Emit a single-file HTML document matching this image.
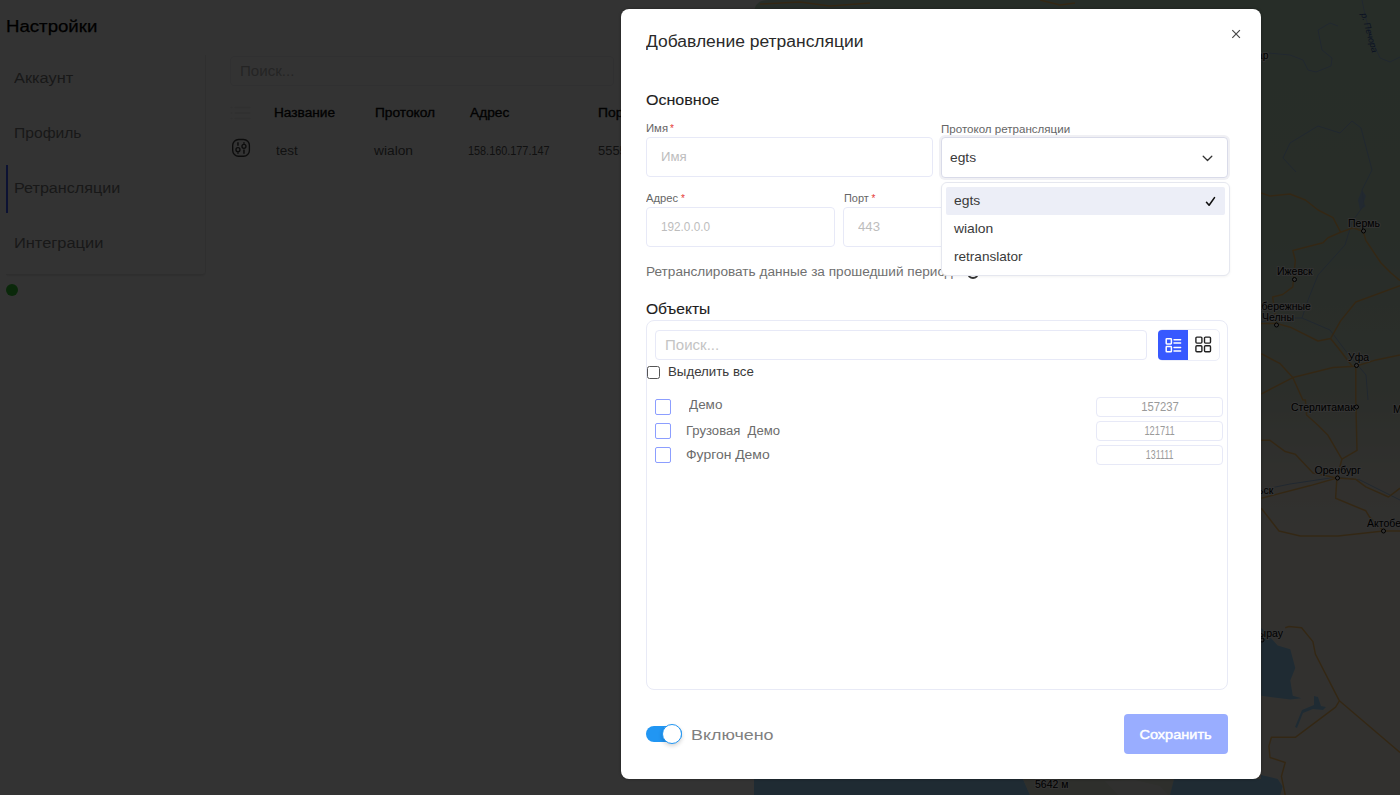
<!DOCTYPE html>
<html lang="ru">
<head>
<meta charset="utf-8">
<title>Настройки</title>
<style>
*{box-sizing:border-box;margin:0;padding:0}
html,body{width:1400px;height:795px;overflow:hidden;background:#fff}
body{font-family:"Liberation Sans",sans-serif;color:#222;position:relative}
.a{position:absolute;white-space:nowrap}
.t{position:absolute;white-space:pre;line-height:20px;height:20px}
#page{position:absolute;left:0;top:0;width:1400px;height:795px;background:#fff}
#overlay{position:absolute;left:0;top:0;width:1400px;height:795px;background:rgba(0,0,0,.8)}
.side{left:6px;top:55px;width:200px;height:220px;border-radius:0 0 4px 0;border-right:1px solid #ebebeb;border-bottom:1px solid #e6e6e6;box-shadow:0 2px 2px -1px rgba(0,0,0,.1);background:#fff}
#modal{position:absolute;left:621px;top:9px;width:640px;height:770px;background:#fff;border-radius:8px;overflow:hidden;box-shadow:0 0 3px rgba(0,0,0,.35)}
.inp{position:absolute;border:1px solid #e7e9f7;border-radius:4px;background:#fff}
.cb{position:absolute;width:16px;height:16px;border:1px solid #8c9eff;border-radius:2px;background:#fff}
.ast{position:absolute;font-size:10px;line-height:10px;color:#e53935}
</style>
</head>
<body>
<div id="page">
  <div class="a side"></div>
  <div class="a" style="left:6px;top:165px;width:2px;height:48px;background:#3d5afe"></div>
  <div class="a" style="left:6px;top:284px;width:12px;height:12px;border-radius:50%;background:#34c834"></div>
  <div class="a" style="left:230px;top:56px;width:384px;height:30px;border:1px solid #efeff2;border-radius:4px"></div>
  <svg class="a" style="left:230px;top:104px" width="22" height="18" viewBox="0 0 22 18" stroke="#ededed" stroke-width="1.6" stroke-linecap="round"><path d="M1 3.5h.8M5 3.5h15M1 9h.8M5 9h15M1 14.5h.8M5 14.5h15"/></svg>
  <svg class="a" style="left:231px;top:138px" width="20" height="20" viewBox="0 0 20 20" fill="none" stroke="#3c3c3c" stroke-width="1.35"><rect x="1.7" y="1.45" width="16.7" height="16.75" rx="5.8"/><path d="M6.97 4.3v3.5M6.97 14.3v1.4M12.96 4.3v1.5M12.96 11.5v4.2" stroke-width="1.5"/><circle cx="6.97" cy="11.67" r="2"/><circle cx="12.96" cy="8.3" r="2"/></svg>
  <div class="t" style="left:6.4px;top:16.8px;font-size:16px;color:#000;transform-origin:0 50%;transform:scaleX(1.164);-webkit-text-stroke:.25px #000">Настройки</div>
  <div class="t" style="left:13.8px;top:68.0px;font-size:14px;color:#7a7a7a;transform-origin:0 50%;transform:scaleX(1.168)">Аккаунт</div>
  <div class="t" style="left:13.8px;top:123.0px;font-size:14px;color:#7a7a7a;transform-origin:0 50%;transform:scaleX(1.117)">Профиль</div>
  <div class="t" style="left:13.8px;top:178.0px;font-size:14px;color:#7a7a7a;transform-origin:0 50%;transform:scaleX(1.153)">Ретрансляции</div>
  <div class="t" style="left:13.8px;top:233.0px;font-size:14px;color:#7a7a7a;transform-origin:0 50%;transform:scaleX(1.173)">Интеграции</div>
  <div class="t" style="left:240.4px;top:60.6px;font-size:14px;color:#b5b5b5;transform-origin:0 50%;transform:scaleX(1.078)">Поиск...</div>
  <div class="t" style="left:274.2px;top:102.7px;font-size:12px;color:#0a0a0a;transform-origin:0 50%;transform:scaleX(1.138);-webkit-text-stroke:.32px #0a0a0a">Название</div>
  <div class="t" style="left:374.5px;top:102.7px;font-size:12px;color:#0a0a0a;transform-origin:0 50%;transform:scaleX(1.144);-webkit-text-stroke:.32px #0a0a0a">Протокол</div>
  <div class="t" style="left:470.4px;top:102.7px;font-size:12px;color:#0a0a0a;transform-origin:0 50%;transform:scaleX(1.144);-webkit-text-stroke:.32px #0a0a0a">Адрес</div>
  <div class="t" style="left:598.4px;top:102.7px;font-size:12px;color:#0a0a0a;transform-origin:0 50%;transform:scaleX(1.157);-webkit-text-stroke:.32px #0a0a0a">Порт</div>
  <div class="t" style="left:276.4px;top:140.7px;font-size:12px;color:#555;transform-origin:0 50%;transform:scaleX(1.122)">test</div>
  <div class="t" style="left:374.2px;top:140.7px;font-size:12px;color:#555;transform-origin:0 50%;transform:scaleX(1.146)">wialon</div>
  <div class="t" style="left:468.2px;top:140.7px;font-size:12px;color:#555;transform-origin:0 50%;transform:scaleX(0.905)">158.160.177.147</div>
  <div class="t" style="left:598.4px;top:140.7px;font-size:12px;color:#555;transform-origin:0 50%;transform:scaleX(1.079)">5555</div>
<svg class="a" style="left:0;top:0" width="1400" height="795" viewBox="0 0 1400 795">
<defs><linearGradient id="mg" x1="0" y1="0" x2="0" y2="1"><stop offset="0" stop-color="#c3e1c8"/><stop offset=".3" stop-color="#c6e0c9"/><stop offset=".5" stop-color="#d9e5d3"/><stop offset=".6" stop-color="#f1efe4"/><stop offset=".68" stop-color="#f9f5ec"/><stop offset="1" stop-color="#f9f5ec"/></linearGradient></defs>
<path d="M768 0H1400V795H754V14Q754 0 768 0Z" fill="url(#mg)"/>
<path d="M754 779H1023L1030 795H754Z" fill="#9bd7ff"/>
<path d="M1023 779H1174L1170 795H1030Z" fill="#e4e9da"/><path d="M1105 781l30-1 25 6 8 9h-50z" fill="#f0f0ea"/>
<path d="M1174 779H1261V775L1277.7 778.9L1282.7 786.4L1280.2 795H1170Z" fill="#9bd7ff"/>
<path d="M1261.3 627.7L1277.7 645.4L1290.3 649.2L1295.3 668L1290.3 680.6L1292.8 695.8L1301.6 698.3L1290.3 699.6L1261.3 695.8Z" fill="#9bd7ff"/>
<path d="M1314 696l4 1 3 9 5 1-3 3-10-1-10 4-6 15-2-1 7-17 12-5z" fill="#9bd7ff"/>
<path d="M1362 190l4 6-3 8 3 2-6 4-2-10z" fill="#a9cdf0"/>
<polyline points="1268,53 1290,55 1303,60 1308,70 1316,72 1331,66 1332,58 1322,50 1318,30 1330,23 1338,26" fill="none" stroke="#a3c4ea" stroke-width="1"/>
<polyline points="1362,0 1365,15 1372,40 1380,58 1390,62 1400,57" fill="none" stroke="#a3c4ea" stroke-width="1"/>
<polyline points="1296,172 1283,158 1290,143 1318,126 1340,133 1352,121 1361,128 1372,170 1362,190 1364,205 1352,222 1345,245 1318,275 1308,300 1302,318 1330,330 1345,350 1366,375 1368,400" fill="none" stroke="#a3c4ea" stroke-width="1"/>
<polyline points="1261,322 1280,318 1302,318" fill="none" stroke="#a3c4ea" stroke-width="1"/>
<polyline points="1261,490 1290,484 1337,477 1360,480 1400,500" fill="none" stroke="#a3c4ea" stroke-width="1"/>
<polyline points="1261,323.4 1276.4,323.4 1290.3,327.2 1318,341 1330.6,338.5 1340.6,320.9 1355.8,302 1400,285.6" fill="none" stroke="#ffc266" stroke-width="1.5" stroke-linejoin="round"/>
<polyline points="1363.3,231.5 1353.2,227.7 1340.6,232.2 1328,237.8 1323,242.8 1292.8,250.4 1295.3,260.5 1292.8,286.9 1282.7,294.5 1272.6,297 1276.4,323.4" fill="none" stroke="#ffc266" stroke-width="1.5" stroke-linejoin="round"/>
<polyline points="1363.3,231.5 1365.8,240.3 1381,263 1391,273 1400,280.6" fill="none" stroke="#ffc266" stroke-width="1.5" stroke-linejoin="round"/>
<polyline points="1340.6,232.2 1333,217.6 1318,210 1305.4,200 1290,194 1270,196 1261,193" fill="none" stroke="#ffc266" stroke-width="1.5" stroke-linejoin="round"/>
<polyline points="1355.8,366.2 1333,367.5 1292.8,377.6 1280.2,363.7 1261.3,353.7" fill="none" stroke="#ffc266" stroke-width="1.5" stroke-linejoin="round"/>
<polyline points="1261.3,394 1292.8,377.6 1302.9,400 1305.4,400 1306.6,415 1318,425.2 1328,435.3 1341.9,459.2 1336.9,478" fill="none" stroke="#ffc266" stroke-width="1.5" stroke-linejoin="round"/>
<polyline points="1355.8,366.2 1376,359.9 1400,354.9" fill="none" stroke="#ffc266" stroke-width="1.5" stroke-linejoin="round"/>
<polyline points="1352,366 1340.6,351 1330.6,338.5" fill="none" stroke="#ffc266" stroke-width="1.5" stroke-linejoin="round"/>
<polyline points="1355.8,366.2 1355.8,400 1357,450.4 1341.9,459.2" fill="none" stroke="#ffc266" stroke-width="1.5" stroke-linejoin="round"/>
<polyline points="1336.9,478 1310.4,485.6 1261.3,498.2" fill="none" stroke="#ffc266" stroke-width="1.5" stroke-linejoin="round"/>
<polyline points="1261.3,440.3 1270,440.3 1285.2,451.6 1295.3,454.2 1313,473 1336.9,478" fill="none" stroke="#ffc266" stroke-width="1.5" stroke-linejoin="round"/>
<polyline points="1336.9,478 1355.8,479.3 1365.8,486.9 1388.5,497 1400,488.2" fill="none" stroke="#ffc266" stroke-width="1.5" stroke-linejoin="round"/>
<polyline points="1336.9,478 1335.6,498.2 1365.8,510.8 1369.6,517.1 1383.5,531 1400,531" fill="none" stroke="#ffc266" stroke-width="1.5" stroke-linejoin="round"/>
<polyline points="1261.3,508.3 1279,531 1300.3,536 1338,536 1383.5,531" fill="none" stroke="#ffc266" stroke-width="1.5" stroke-linejoin="round"/>
<polyline points="1285.2,627.7 1289,626.5 1301.6,627.7 1312.9,641.6 1315.4,654.2 1338.1,698.3 1339.4,700.8 1335.6,707.1 1295.3,737.3 1271.4,737.3 1268.9,746.1 1270,757.5 1285.2,762.5 1281.4,776.4 1285.2,795" fill="none" stroke="#ffc266" stroke-width="1.5" stroke-linejoin="round"/>
<polyline points="1339.4,700.8 1400,752.4" fill="none" stroke="#ffc266" stroke-width="1.5" stroke-linejoin="round"/>
<polyline points="760,4 800,2 830,6 870,3" fill="none" stroke="#ffc266" stroke-width="1.5" stroke-linejoin="round"/>
<polyline points="1040,0 1060,5 1075,3" fill="none" stroke="#ffc266" stroke-width="1.5" stroke-linejoin="round"/>
<g font-family="'Liberation Sans',sans-serif" font-size="10.5" fill="#000" stroke="#fff" stroke-width="2" paint-order="stroke" stroke-linejoin="round">
<text x="1348" y="226.5">Пермь</text>
<text x="1277" y="274.5">Ижевск</text>
<text x="1248" y="310">Набережные</text>
<text x="1262" y="321">Челны</text>
<text x="1348" y="361">Уфа</text>
<text x="1291" y="411">Стерлитамак</text>
<text x="1314.5" y="473.5">Оренбург</text>
<text x="1367" y="527">Актобе</text>
<text x="1234" y="494">Уральск</text>
<text x="1247" y="637">Атырау</text>
<text x="1393" y="413">Магнитогорск</text>
<text x="1035" y="788">5642 м</text>
<text x="1268.5" y="59" text-anchor="end">Сыктывкар</text>
</g>
<text font-family="'Liberation Sans',sans-serif" font-size="9" font-style="italic" fill="#3a5ea8" transform="translate(1361,14) rotate(74)">р. Печора</text>
<circle cx="1363.5" cy="231" r="2" fill="#fff" stroke="#000" stroke-width="1"/>
<circle cx="1294.5" cy="279.5" r="2" fill="#fff" stroke="#000" stroke-width="1"/>
<circle cx="1276.5" cy="325" r="2" fill="#fff" stroke="#000" stroke-width="1"/>
<circle cx="1356.5" cy="365.5" r="2" fill="#fff" stroke="#000" stroke-width="1"/>
<circle cx="1356.5" cy="407" r="2" fill="#fff" stroke="#000" stroke-width="1"/>
<circle cx="1337.5" cy="478" r="2" fill="#fff" stroke="#000" stroke-width="1"/>
<circle cx="1383.5" cy="531" r="2" fill="#fff" stroke="#000" stroke-width="1"/>
<circle cx="1262" cy="640" r="2" fill="#fff" stroke="#000" stroke-width="1"/>
</svg>
</div>
<div id="overlay"></div>

<div id="modal">
  <svg class="a" style="left:610px;top:20px" width="10" height="10" viewBox="0 0 10 10" stroke="#484848" stroke-width="1.2"><path d="M1.3 1.2l7.6 7.6M8.9 1.2l-7.6 7.6"/></svg>
  <div class="inp" style="left:25px;top:128px;width:287px;height:40px"></div>
  <div class="inp" style="left:320px;top:128px;width:287px;height:41px;border-color:#d9dbe9;box-shadow:0 0 0 2px #f0f0f4"></div>
  <svg class="a" style="left:581px;top:146px" width="11" height="7" viewBox="0 0 11 7" fill="none" stroke="#333" stroke-width="1.3" stroke-linecap="round" stroke-linejoin="round"><path d="M1.2 1.3l4.3 4.2 4.3-4.2"/></svg>
  <div class="inp" style="left:25px;top:198px;width:189px;height:40px"></div>
  <div class="inp" style="left:222px;top:198px;width:189px;height:40px"></div>
  <div class="ast" style="left:49px;top:115px">*</div>
  <div class="ast" style="left:60px;top:185px">*</div>
  <div class="ast" style="left:250.5px;top:185px">*</div>
  <div class="inp" style="left:34px;top:321px;width:492px;height:30px"></div>
  <div class="a" style="left:25px;top:311px;width:582px;height:370px;border:1px solid #e8eaf6;border-radius:8px"></div>
  <div class="a" style="left:537px;top:320px;width:61.5px;height:32px;border:1px solid #eceef8;border-radius:5px;background:#fff"></div>
  <div class="a" style="left:537px;top:321px;width:30px;height:30px;background:#3759ff;border-radius:4px 0 0 4px"></div>
  <svg class="a" style="left:544px;top:327.6px" width="17" height="17" viewBox="0 0 17 17" fill="none" stroke="#fff" stroke-width="1.5" stroke-linecap="round" stroke-linejoin="round"><rect x="1.2" y="1.7" width="5.2" height="5.2" rx=".6"/><rect x="1.2" y="9.6" width="5.2" height="5.2" rx=".6"/><path d="M9 2.7h6.6M9 6h6.6M9 10.6h6.6M9 13.9h6.6"/></svg>
  <svg class="a" style="left:573px;top:326.2px" width="18" height="18" viewBox="0 0 18 18" fill="none" stroke="#222" stroke-width="1.4" stroke-linejoin="round"><rect x="1.9" y="2.1" width="6" height="6" rx="1"/><rect x="10.5" y="2.1" width="6" height="6" rx="1"/><rect x="1.9" y="10.7" width="6" height="6" rx="1"/><rect x="10.5" y="10.7" width="6" height="6" rx="1"/></svg>
  <div class="a" style="left:26px;top:357px;width:13px;height:13px;border:1px solid #555;border-radius:2.5px;background:#fff"></div>
  <div class="cb" style="left:34px;top:390px"></div>
  <div class="inp" style="left:475px;top:388px;width:127px;height:20px"></div>
  <div class="cb" style="left:34px;top:414px"></div>
  <div class="inp" style="left:475px;top:412px;width:127px;height:20px"></div>
  <div class="cb" style="left:34px;top:438px"></div>
  <div class="inp" style="left:475px;top:436px;width:127px;height:20px"></div>
  <div class="a" style="left:25px;top:717px;width:36px;height:16px;border-radius:8px;background:#2196f3"></div>
  <div class="a" style="left:40.6px;top:715px;width:20px;height:20px;border-radius:50%;background:#fff;border:1px solid #2196f3;box-shadow:0 2px 4px rgba(0,0,0,.18)"></div>
  <div class="a" style="left:503px;top:705px;width:104px;height:40px;border-radius:4px;background:#99adff"></div>
  <div class="t" style="left:25.3px;top:23.3px;font-size:16px;color:#2a2a2a;transform-origin:0 50%;transform:scaleX(1.091)">Добавление ретрансляции</div>
  <div class="t" style="left:25.3px;top:81.0px;font-size:14px;color:#1d1d1d;transform-origin:0 50%;transform:scaleX(1.146);-webkit-text-stroke:.12px #1d1d1d">Основное</div>
  <div class="t" style="left:25.3px;top:110.3px;font-size:10px;color:#666;transform-origin:0 50%;transform:scaleX(1.129)">Имя</div>
  <div class="t" style="left:320.4px;top:110.8px;font-size:10px;color:#666;transform-origin:0 50%;transform:scaleX(1.156)">Протокол ретрансляции</div>
  <div class="t" style="left:25.4px;top:180.3px;font-size:10px;color:#666;transform-origin:0 50%;transform:scaleX(1.117)">Адрес</div>
  <div class="t" style="left:222.8px;top:180.3px;font-size:10px;color:#666;transform-origin:0 50%;transform:scaleX(1.094)">Порт</div>
  <div class="t" style="left:39.8px;top:137.8px;font-size:12px;color:#bdbdbd;transform-origin:0 50%;transform:scaleX(1.099)">Имя</div>
  <div class="t" style="left:40.2px;top:207.9px;font-size:12px;color:#bdbdbd;transform-origin:0 50%;transform:scaleX(0.979)">192.0.0.0</div>
  <div class="t" style="left:237.0px;top:207.9px;font-size:12px;color:#bdbdbd;transform-origin:0 50%;transform:scaleX(1.098)">443</div>
  <div class="t" style="left:329.1px;top:138.8px;font-size:13px;color:#3a3a3a;transform-origin:0 50%;transform:scaleX(1.062)">egts</div>
  <div class="t" style="left:25.4px;top:252.8px;font-size:12.5px;color:#707070;transform-origin:0 50%;transform:scaleX(1.089)">Ретранслировать данные за прошедший период</div>
  <div class="t" style="left:25.4px;top:289.6px;font-size:14px;color:#1d1d1d;transform-origin:0 50%;transform:scaleX(1.113);-webkit-text-stroke:.12px #1d1d1d">Объекты</div>
  <div class="t" style="left:44.4px;top:326.4px;font-size:14px;color:#c4c4c4;transform-origin:0 50%;transform:scaleX(1.074)">Поиск...</div>
  <div class="t" style="left:47.3px;top:352.7px;font-size:12px;color:#3a3a3a;transform-origin:0 50%;transform:scaleX(1.106)">Выделить все</div>
  <div class="t" style="left:67.9px;top:385.8px;font-size:12px;color:#6c6c6c;transform-origin:0 50%;transform:scaleX(1.123)">Демо</div>
  <div class="t" style="left:65.4px;top:411.6px;font-size:12px;color:#6c6c6c;transform-origin:0 50%;transform:scaleX(1.090)">Грузовая  Демо</div>
  <div class="t" style="left:65.4px;top:435.6px;font-size:12px;color:#6c6c6c;transform-origin:0 50%;transform:scaleX(1.160)">Фургон Демо</div>
  <div class="t" style="left:518.7px;top:387.8px;font-size:12px;color:#9a9a9a;transform-origin:50% 50%;transform:scaleX(0.939)">157237</div>
  <div class="t" style="left:519.1px;top:411.8px;font-size:12px;color:#9a9a9a;transform-origin:50% 50%;transform:scaleX(0.776)">121711</div>
  <div class="t" style="left:519.8px;top:435.8px;font-size:12px;color:#9a9a9a;transform-origin:50% 50%;transform:scaleX(0.741)">131111</div>
  <div class="t" style="left:69.6px;top:715.6px;font-size:15.5px;color:#808080;transform-origin:0 50%;transform:scaleX(1.155)">Включено</div>
  <div class="t" style="left:520.9px;top:715.5px;font-size:13.5px;color:#fff;transform-origin:50% 50%;transform:scaleX(1.076);-webkit-text-stroke:.45px #fff">Сохранить</div>
  <div class="a" style="left:346px;top:258px;width:12px;height:12px;border-radius:50%;border:2px solid #333;background:#fff"></div>
  <!-- dropdown -->
  <div class="a" style="left:320px;top:173px;width:289px;height:94px;border:1px solid #e5e7ef;border-radius:6px;background:#fff;box-shadow:0 1px 3px rgba(0,0,0,.05)"></div>
  <div class="a" style="left:325px;top:178px;width:279px;height:28px;background:#eceef7;border-radius:2px"></div>
  <svg class="a" style="left:584px;top:187px" width="11" height="11" viewBox="0 0 11 11" fill="none" stroke="#111" stroke-width="1.6" stroke-linecap="round" stroke-linejoin="round"><path d="M1.5 6.3l2.6 2.9 5.4-7.6"/></svg>
  <div class="t" style="left:333.0px;top:181.5px;font-size:13px;color:#3a3a3a;transform-origin:0 50%;transform:scaleX(1.070)">egts</div>
  <div class="t" style="left:333.0px;top:209.6px;font-size:13px;color:#3a3a3a;transform-origin:0 50%;transform:scaleX(1.066)">wialon</div>
  <div class="t" style="left:333.0px;top:237.8px;font-size:13px;color:#3a3a3a;transform-origin:0 50%;transform:scaleX(1.043)">retranslator</div>
</div>
</body>
</html>
